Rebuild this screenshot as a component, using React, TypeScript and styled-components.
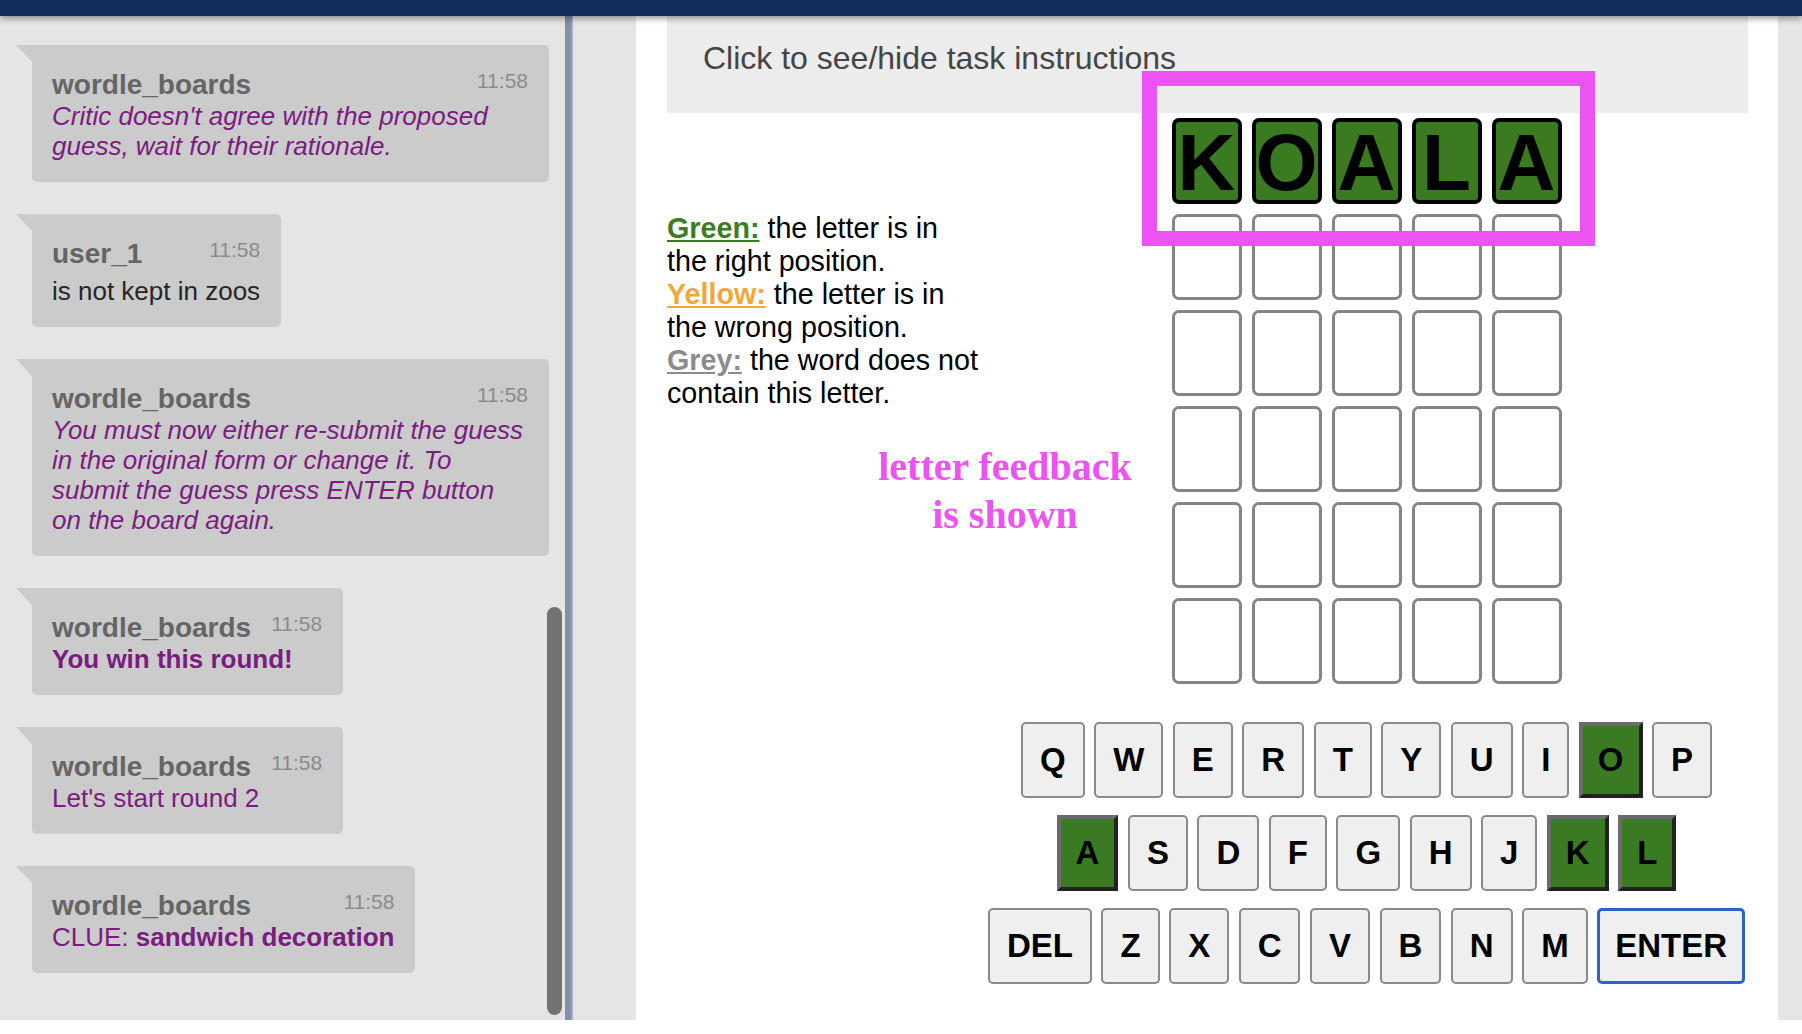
import React from "react";
import styled, { createGlobalStyle, css } from "styled-components";

const GlobalStyle = createGlobalStyle`
  html, body {
    margin: 0;
    padding: 0;
    background: #ffffff;
    font-family: "Liberation Sans", Arial, Helvetica, sans-serif;
  }
  * {
    box-sizing: border-box;
  }
`;

type MessageKind = "italic" | "user" | "bold" | "plain" | "clue";

const messages: { name: string; kind: MessageKind; text: string }[] = [
  {
    name: "wordle_boards",
    kind: "italic",
    text: "Critic doesn't agree with the proposed guess, wait for their rationale.",
  },
  { name: "user_1", kind: "user", text: "is not kept in zoos" },
  {
    name: "wordle_boards",
    kind: "italic",
    text: "You must now either re-submit the guess in the original form or change it. To submit the guess press ENTER button on the board again.",
  },
  { name: "wordle_boards", kind: "bold", text: "You win this round!" },
  { name: "wordle_boards", kind: "plain", text: "Let's start round 2" },
  { name: "wordle_boards", kind: "clue", text: "sandwich decoration" },
];

const guess = ["K", "O", "A", "L", "A"];
const emptyRows = 5;

const keyRows = [
  ["Q", "W", "E", "R", "T", "Y", "U", "I", "O", "P"],
  ["A", "S", "D", "F", "G", "H", "J", "K", "L"],
  ["DEL", "Z", "X", "C", "V", "B", "N", "M", "ENTER"],
];
const correctKeys = ["K", "O", "A", "L"];

const App = () => {
  return (
    <>
      <GlobalStyle />
      <Page>
        <TopBar />
        <Columns>
          <ChatPanel>
            <ChatList>
              {messages.map((m, i) => (
                <Bubble key={i}>
                  <BubbleHeader>
                    <Sender>{m.name}</Sender>
                    <Time>11:58</Time>
                  </BubbleHeader>
                  <MessageText $kind={m.kind}>
                    {m.kind === "clue" ? (
                      <>
                        CLUE: <strong>{m.text}</strong>
                      </>
                    ) : (
                      m.text
                    )}
                  </MessageText>
                </Bubble>
              ))}
            </ChatList>
            <ScrollThumb />
          </ChatPanel>
          <Divider />
          <Gutter />
          <Main>
            <Instructions>Click to see/hide task instructions</Instructions>
            <GameRow>
              <Legend>
                <LegendItem>
                  <LegendTag $color="#3a7d22">Green:</LegendTag> the letter is
                  in the right position.
                </LegendItem>
                <LegendItem>
                  <LegendTag $color="#f1a73a">Yellow:</LegendTag> the letter is
                  in the wrong position.
                </LegendItem>
                <LegendItem>
                  <LegendTag $color="#8c8c8c">Grey:</LegendTag> the word does
                  not contain this letter.
                </LegendItem>
              </Legend>
              <Game>
                <Board>
                  {guess.map((l, i) => (
                    <Tile key={`g${i}`} $filled>
                      {l}
                    </Tile>
                  ))}
                  {Array.from({ length: emptyRows * 5 }).map((_, i) => (
                    <Tile key={`e${i}`} />
                  ))}
                </Board>
                <Keyboard>
                  {keyRows.map((row, r) => (
                    <KeyRow key={r}>
                      {row.map((k) => (
                        <Key
                          key={k}
                          $state={
                            k === "ENTER"
                              ? "focus"
                              : correctKeys.includes(k)
                              ? "correct"
                              : "normal"
                          }
                        >
                          {k}
                        </Key>
                      ))}
                    </KeyRow>
                  ))}
                </Keyboard>
              </Game>
            </GameRow>
            <Highlight />
            <Annotation>
              letter feedback
              <br />
              is shown
            </Annotation>
          </Main>
          <RightStrip />
        </Columns>
      </Page>
    </>
  );
};

const Page = styled.div`
  display: flex;
  flex-direction: column;
  height: 1020px;
`;

const TopBar = styled.div`
  flex: 0 0 16px;
  background: #122d59;
  position: relative;
  z-index: 5;
  box-shadow: 0 2px 7px rgba(0, 0, 0, 0.45);
`;

const Columns = styled.div`
  flex: 1;
  display: flex;
  min-height: 0;
`;

const ChatPanel = styled.div`
  width: 565px;
  flex-shrink: 0;
  background: #e4e5e7;
  position: relative;
  overflow: hidden;
`;

const ChatList = styled.div`
  display: flex;
  flex-direction: column;
  align-items: flex-start;
  gap: 32px;
  padding: 29px 0 0 32px;
`;

const Bubble = styled.div`
  position: relative;
  max-width: 517px;
  background: #cbcbcb;
  border-radius: 0 5px 5px 5px;
  padding: 24px 21px 21px 20px;

  &::before {
    content: "";
    position: absolute;
    left: -16px;
    top: 0;
    border-top: 17px solid #cbcbcb;
    border-left: 16px solid transparent;
  }
`;

const BubbleHeader = styled.div`
  display: flex;
  justify-content: space-between;
  align-items: flex-start;
  gap: 20px;
`;

const Sender = styled.div`
  font-size: 28px;
  line-height: 32px;
  font-weight: bold;
  color: #656565;
`;

const Time = styled.div`
  font-size: 21px;
  line-height: 24px;
  color: #8b8b8b;
`;

const MessageText = styled.div<{ $kind: MessageKind }>`
  font-size: 26px;
  line-height: 30px;
  color: #7b1c80;

  strong {
    font-weight: bold;
  }

  ${({ $kind }) =>
    $kind === "italic" &&
    css`
      font-style: italic;
    `}
  ${({ $kind }) =>
    $kind === "bold" &&
    css`
      font-weight: bold;
    `}
  ${({ $kind }) =>
    $kind === "user" &&
    css`
      color: #262626;
      margin-top: 6px;
    `}
`;

const ScrollThumb = styled.div`
  position: absolute;
  right: 3px;
  top: 591px;
  width: 15px;
  height: 408px;
  border-radius: 8px;
  background: #727272;
`;

const Divider = styled.div`
  width: 8px;
  flex-shrink: 0;
  background: linear-gradient(to right, #838ca8 0%, #8891ab 70%, #b9bdcb 100%);
`;

const Gutter = styled.div`
  width: 63px;
  flex-shrink: 0;
  background: #e4e5e7;
`;

const Main = styled.div`
  flex: 1;
  position: relative;
  background: #ffffff;
  padding: 0 30px 0 31px;
`;

const RightStrip = styled.div`
  width: 24px;
  flex-shrink: 0;
  background: #e4e5e7;
`;

const Instructions = styled.div`
  height: 97px;
  background: #ececec;
  padding: 24px 36px 0;
  font-size: 32px;
  line-height: 37px;
  color: #454545;
`;

const GameRow = styled.div`
  display: flex;
  margin-top: 5px;
`;

const Legend = styled.div`
  flex: 0 0 318px;
  margin-top: 94px;
  font-size: 28.7px;
  line-height: 33px;
  color: #000;
`;

const LegendItem = styled.div``;

const LegendTag = styled.span<{ $color: string }>`
  color: ${({ $color }) => $color};
  font-weight: bold;
  text-decoration: underline;
  text-underline-offset: 2px;
`;

const Game = styled.div`
  flex: 1;
  display: flex;
  flex-direction: column;
  align-items: center;
`;

const Board = styled.div`
  display: grid;
  grid-template-columns: repeat(5, 70px);
  grid-auto-rows: 86px;
  gap: 10px;
`;

const Tile = styled.div<{ $filled?: boolean }>`
  display: flex;
  align-items: center;
  justify-content: center;
  border-radius: 7px;
  border: 3px solid #858585;
  background: #ffffff;
  font-weight: bold;
  font-size: 80px;
  line-height: 1;
  color: #000;

  ${({ $filled }) =>
    $filled &&
    css`
      border: 4px solid #000;
      background: #3a7b22;
      padding-top: 4px;
    `}
`;

const Keyboard = styled.div`
  margin-top: 38px;
  display: flex;
  flex-direction: column;
  align-items: center;
  gap: 17px;
`;

const KeyRow = styled.div`
  display: flex;
  gap: 9.5px;
`;

const Key = styled.button<{ $state: "normal" | "correct" | "focus" }>`
  height: 76px;
  margin: 0;
  padding: 0 17px;
  font-family: "Liberation Sans", Arial, Helvetica, sans-serif;
  font-size: 33px;
  font-weight: bold;
  color: #000;
  background: #efefef;
  border: 2px solid #8a8a8a;
  border-radius: 5px;

  ${({ $state }) =>
    $state === "correct" &&
    css`
      padding: 0 15px;
      background: #3a7a22;
      border: 4px solid;
      border-color: #6b6b6b #222222 #222222 #6b6b6b;
      border-radius: 0;
    `}

  ${({ $state }) =>
    $state === "focus" &&
    css`
      padding: 0 15px;
      border: 3px solid #2d62cd;
    `}
`;

const Highlight = styled.div`
  position: absolute;
  left: 506px;
  top: 55px;
  width: 453px;
  height: 175px;
  border: 15px solid #ec53f2;
  z-index: 3;
`;

const Annotation = styled.div`
  position: absolute;
  left: 219px;
  top: 427px;
  width: 300px;
  text-align: center;
  font-family: "Liberation Serif", "Times New Roman", serif;
  font-weight: bold;
  font-size: 40px;
  line-height: 48px;
  color: #ec53f2;
`;

export default App;
